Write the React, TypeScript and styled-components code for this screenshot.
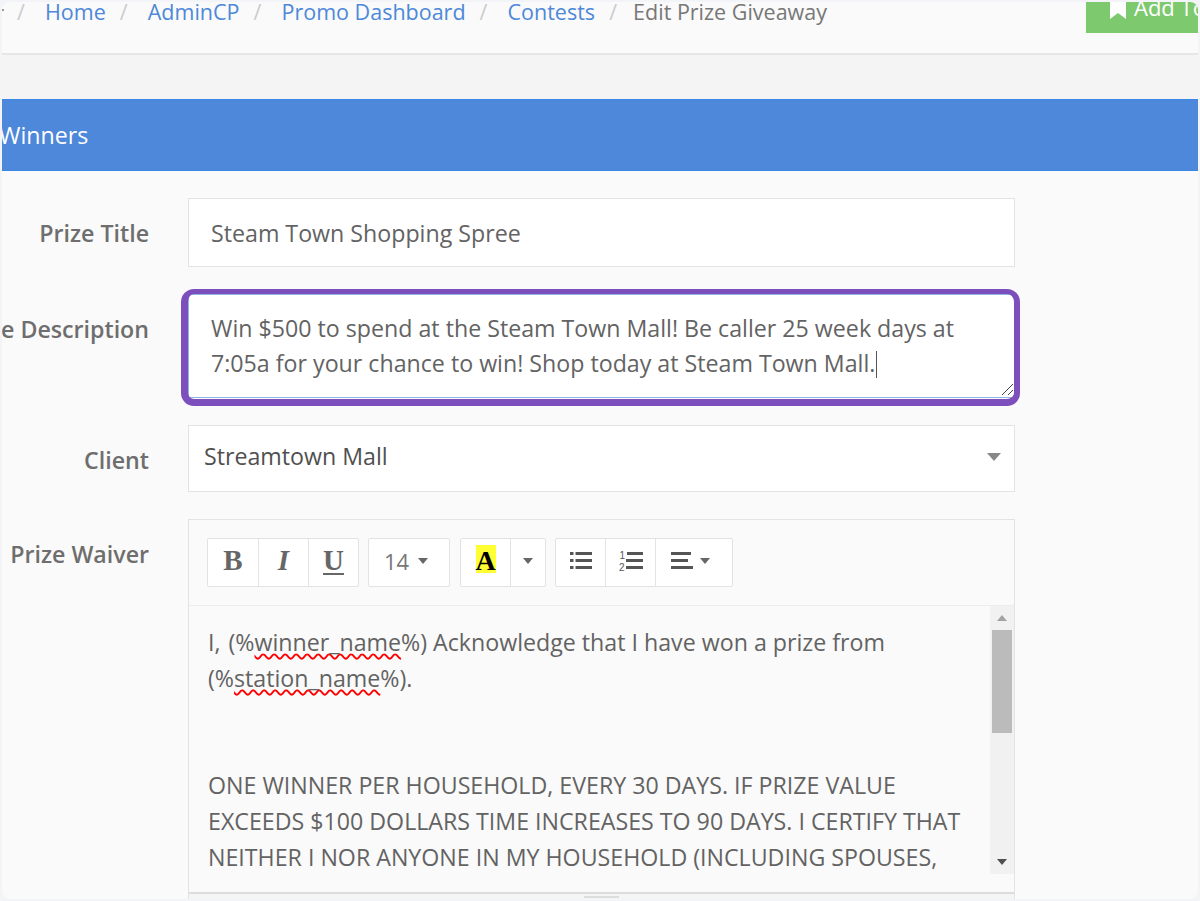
import React from "react";
import styled, { createGlobalStyle } from "styled-components";

const GlobalStyle = createGlobalStyle`
  html, body {
    margin: 0;
    padding: 0;
    background: #f3f4f8;
  }
  body {
    font-family: "Open Sans", "Liberation Sans", sans-serif;
    color: #636363;
  }
  * {
    box-sizing: border-box;
  }
`;

const Screen = styled.div`
  width: 1200px;
  height: 901px;
  padding: 2px;
  background: #f3f4f8;
  overflow: hidden;
`;

const Frame = styled.div`
  width: 100%;
  height: 100%;
  overflow: hidden;
  border-radius: 8px;
  background: #fafafa;
  display: flex;
  flex-direction: column;
`;

const Breadcrumbs = styled.div`
  height: 53px;
  flex: none;
  overflow: hidden;
  display: flex;
  justify-content: space-between;
  background: #fafafa;
  border-bottom: 2px solid #e6e6e6;
`;

const Trail = styled.ol`
  position: relative;
  list-style: none;
  margin: -11px 0 0;
  padding: 0 0 0 1px;
  height: 40px;
  display: flex;
  align-items: center;
  font-size: 21.5px;
  white-space: nowrap;

  &::before {
    content: "";
    position: absolute;
    left: 0;
    top: 18px;
    width: 2px;
    height: 2px;
    background: #999;
  }
`;

const Crumb = styled.li<{ $current?: boolean }>`
  color: ${(p) => (p.$current ? "#777" : "#4d88d9")};
`;

const Slash = styled.li<{ $tight?: boolean }>`
  color: #ccc;
  width: ${(p) => (p.$tight ? 38 : 42)}px;
  padding-right: ${(p) => (p.$tight ? 2 : 6)}px;
  text-align: center;
  flex: none;
`;

const AddButton = styled.div`
  width: 112px;
  height: 31px;
  flex: none;
  overflow: hidden;
  background: #7dc96d;
  color: #fff;
  font-size: 22px;
  display: flex;
  align-items: flex-start;
  padding: 0 0 0 24px;
  gap: 8px;
  white-space: nowrap;
`;

const AddLabel = styled.span`
  line-height: 30px;
  margin-top: -10px;
`;

const BookmarkIcon = styled.svg`
  flex: none;
`;

const Band = styled.div`
  height: 44px;
  flex: none;
  background: #f4f4f4;
`;

const PanelHeading = styled.h2`
  margin: 0;
  height: 72px;
  flex: none;
  display: flex;
  align-items: center;
  background: #4e88da;
  border-top: 1px solid #3a87e6;
  border-bottom: 1px solid #3a87e6;
  color: #fff;
  font-size: 23.2px;
  font-weight: 400;
  white-space: nowrap;
`;

const HeadingText = styled.span`
  margin-left: -3px;
`;

const Form = styled.div`
  flex: 1;
  min-height: 0;
  padding-top: 27px;
  display: flex;
  flex-direction: column;
  gap: 27px;
`;

const Row = styled.div`
  display: grid;
  grid-template-columns: 147px 827px;
  column-gap: 39px;
  align-items: start;
`;

const Label = styled.label<{ $top: number }>`
  display: flex;
  justify-content: flex-end;
  white-space: nowrap;
  font-size: 23.2px;
  font-weight: 600;
  line-height: 30px;
  color: #6e6e6e;
  padding-top: ${(p) => p.$top}px;
`;

const Input = styled.div`
  height: 69px;
  background: #fff;
  border: 1px solid #e3e3e3;
  padding: 0 22px;
  display: flex;
  align-items: center;
  font-size: 23.2px;
`;

const TextArea = styled.div`
  position: relative;
  height: 104px;
  background: #fff;
  border: 1px solid #8fb4e6;
  border-radius: 2px;
  padding: 16px 22px 0;
  font-size: 23.2px;
  line-height: 35px;

  /* purple focus ring, not quite even on each side */
  &::after {
    content: "";
    position: absolute;
    inset: -6px -6px -9px -8px;
    border-style: solid;
    border-color: #7d4fbd;
    border-width: 5px 6px 7px 7px;
    border-radius: 13px;
    pointer-events: none;
  }
`;

const Caret = styled.span`
  display: inline-block;
  width: 1px;
  height: 27px;
  margin-left: 1px;
  background: #555;
  vertical-align: -6px;
`;

const ResizeGrip = styled.svg`
  position: absolute;
  right: 0;
  bottom: 1px;
`;

const Select = styled.div`
  height: 67px;
  background: #fff;
  border: 1px solid #e3e3e3;
  padding: 0 15px;
  display: flex;
  align-items: center;
  justify-content: space-between;
  font-size: 23.2px;
  color: #505050;
`;

const SelectText = styled.span`
  margin-top: -5px;
`;

const SelectArrow = styled.span`
  width: 0;
  height: 0;
  border-left: 7px solid transparent;
  border-right: 7px solid transparent;
  border-top: 8px solid #888;
  margin: -4px -2px 0 0;
`;

const Editor = styled.div`
  border: 1px solid #e3e3e3;
  background: #fafafa;
`;

const Toolbar = styled.div`
  height: 86px;
  padding: 18px 0 0 18px;
  display: flex;
  border-bottom: 1px solid #ededed;
`;

const ButtonGroup = styled.div<{ $gap: number }>`
  display: flex;
  height: 49px;
  margin-left: ${(p) => p.$gap}px;
  background: #fff;
  border: 1px solid #e3e3e3;
  border-radius: 2px;
`;

const ToolButton = styled.div<{ $w: number; $shift?: number }>`
  width: ${(p) => p.$w}px;
  padding: 0 ${(p) => p.$shift ?? 0}px 4px 0;
  display: flex;
  align-items: center;
  justify-content: center;
  gap: 7px;
  color: #666;
  & + & {
    border-left: 1px solid #e3e3e3;
  }
`;

const SerifGlyph = styled.span<{ $italic?: boolean; $underline?: boolean }>`
  font-family: "Liberation Serif", serif;
  font-weight: 700;
  font-size: 29px;
  line-height: 1;
  margin-top: -1px;
  font-style: ${(p) => (p.$italic ? "italic" : "normal")};
  text-decoration: ${(p) => (p.$underline ? "underline" : "none")};
  text-underline-offset: 3px;
  text-decoration-thickness: 2px;
`;

const SizeText = styled.span`
  font-size: 22px;
  margin-right: 2px;
  color: #777;
`;

const Arrow = styled.span`
  width: 0;
  height: 0;
  border-left: 5.5px solid transparent;
  border-right: 5.5px solid transparent;
  border-top: 6px solid #666;
`;

const ColorGlyph = styled.span`
  width: 20px;
  height: 28px;
  margin-top: -3px;
  background: #ffff33;
  color: #000;
  font-family: "Liberation Serif", serif;
  font-weight: 700;
  font-size: 28px;
  line-height: 31px;
  text-align: center;
`;

const EditArea = styled.div`
  height: 268px;
  display: grid;
  grid-template-columns: 1fr 24px;
  overflow: hidden;
`;

const EditText = styled.div`
  padding: 19.4px 10px 0 19px;
  font-size: 23.2px;
  line-height: 35.7px;
  overflow: hidden;
`;

const Para = styled.p`
  margin: 0 0 71.4px;
`;

const LeadIn = styled.span`
  margin-right: 2px;
`;

const Misspelled = styled.span`
  text-decoration: underline wavy #f00 1.5px;
  text-decoration-skip-ink: none;
  text-underline-offset: 2px;
`;

const Scrollbar = styled.div`
  background: #f1f1f1;
  display: flex;
  flex-direction: column;
  align-items: center;
`;

const ScrollButton = styled.div`
  height: 24px;
  width: 100%;
  flex: none;
  display: flex;
  align-items: center;
  justify-content: center;
`;

const ScrollUp = styled.span`
  width: 0;
  height: 0;
  border-left: 5px solid transparent;
  border-right: 5px solid transparent;
  border-bottom: 6px solid #a3a3a3;
`;

const ScrollDown = styled.span`
  width: 0;
  height: 0;
  border-left: 5px solid transparent;
  border-right: 5px solid transparent;
  border-top: 6px solid #505050;
`;

const ScrollTrack = styled.div`
  flex: 1;
  width: 100%;
  padding: 0 2px;
`;

const ScrollThumb = styled.div`
  height: 103px;
  background: #bbb;
`;

const StatusBar = styled.div`
  height: 24px;
  margin-top: 18px;
  border-top: 2px solid #ddd;
  display: flex;
  justify-content: center;
  padding-top: 2px;
  background: #f5f5f5;
`;

const Grip = styled.div`
  width: 35px;
  height: 2px;
  background: #ddd;
`;

const Bookmark = () => (
  <BookmarkIcon width="16" height="17" viewBox="0 0 16 17">
    <path d="M0 0h16v17l-8-6-8 6z" fill="#fff" />
  </BookmarkIcon>
);

const BulletList = () => (
  <svg width="22" height="17" viewBox="0 0 22 17" fill="#555">
    <rect x="0" y="0" width="3.5" height="3" />
    <rect x="0" y="7" width="3.5" height="3" />
    <rect x="0" y="14" width="3.5" height="3" />
    <rect x="5.5" y="0" width="16.5" height="3" />
    <rect x="5.5" y="7" width="16.5" height="3" />
    <rect x="5.5" y="14" width="16.5" height="3" />
  </svg>
);

const NumberList = () => (
  <svg width="24" height="20" viewBox="0 0 24 20" fill="#555">
    <text x="0.5" y="7.5" fontSize="10" fontFamily="Liberation Sans, sans-serif">1</text>
    <text x="0" y="19.5" fontSize="10" fontFamily="Liberation Sans, sans-serif">2</text>
    <rect x="8" y="1" width="16" height="3" />
    <rect x="7" y="8" width="17" height="3" />
    <rect x="7" y="15" width="17" height="3" />
  </svg>
);

const AlignLeft = () => (
  <svg width="22" height="17" viewBox="0 0 22 17" fill="#555">
    <rect x="0" y="0" width="20" height="3" />
    <rect x="0" y="7" width="17" height="3" />
    <rect x="0" y="14" width="22" height="3" />
  </svg>
);

const App = () => (
  <Screen>
    <GlobalStyle />
    <Frame>
      <Breadcrumbs>
        <Trail>
          <Slash>/</Slash>
          <Crumb>Home</Crumb>
          <Slash>/</Slash>
          <Crumb>AdminCP</Crumb>
          <Slash>/</Slash>
          <Crumb>Promo Dashboard</Crumb>
          <Slash>/</Slash>
          <Crumb>Contests</Crumb>
          <Slash $tight>/</Slash>
          <Crumb $current>Edit Prize Giveaway</Crumb>
        </Trail>
        <AddButton>
          <Bookmark />
          <AddLabel>Add To</AddLabel>
        </AddButton>
      </Breadcrumbs>
      <Band />
      <PanelHeading>
        <HeadingText>Winners</HeadingText>
      </PanelHeading>
      <Form>
        <Row>
          <Label $top={20}>Prize Title</Label>
          <Input>Steam Town Shopping Spree</Input>
        </Row>
        <Row>
          <Label $top={20}>Prize Description</Label>
          <TextArea>
            Win $500 to spend at the Steam Town Mall! Be caller 25 week days at 7:05a for your chance to win! Shop today at Steam Town Mall.
            <Caret />
            <ResizeGrip width="14" height="14" viewBox="0 0 14 14">
              <path d="M2 13 13 2M8 13l5-5" stroke="#444" strokeWidth="1" fill="none" />
            </ResizeGrip>
          </TextArea>
        </Row>
        <Row>
          <Label $top={20}>Client</Label>
          <Select>
            <SelectText>Streamtown Mall</SelectText>
            <SelectArrow />
          </Select>
        </Row>
        <Row>
          <Label $top={20}>Prize Waiver</Label>
          <Editor>
            <Toolbar>
              <ButtonGroup $gap={0}>
                <ToolButton $w={50}><SerifGlyph>B</SerifGlyph></ToolButton>
                <ToolButton $w={50}><SerifGlyph $italic>I</SerifGlyph></ToolButton>
                <ToolButton $w={50}><SerifGlyph $underline>U</SerifGlyph></ToolButton>
              </ButtonGroup>
              <ButtonGroup $gap={9}>
                <ToolButton $w={80} $shift={6}><SizeText>14</SizeText><Arrow /></ToolButton>
              </ButtonGroup>
              <ButtonGroup $gap={10}>
                <ToolButton $w={49}><ColorGlyph>A</ColorGlyph></ToolButton>
                <ToolButton $w={35}><Arrow /></ToolButton>
              </ButtonGroup>
              <ButtonGroup $gap={9}>
                <ToolButton $w={49}><BulletList /></ToolButton>
                <ToolButton $w={50}><NumberList /></ToolButton>
                <ToolButton $w={77} $shift={8}><AlignLeft /><Arrow /></ToolButton>
              </ButtonGroup>
            </Toolbar>
            <EditArea>
              <EditText>
                <Para>
                  <LeadIn>I,</LeadIn> (%<Misspelled>winner_name</Misspelled>%) Acknowledge that I have won a prize from (%<Misspelled>station_name</Misspelled>%).
                </Para>
                <Para>
                  ONE WINNER PER HOUSEHOLD, EVERY 30 DAYS. IF PRIZE VALUE EXCEEDS $100 DOLLARS TIME INCREASES TO 90 DAYS. I CERTIFY THAT NEITHER I NOR ANYONE IN MY HOUSEHOLD (INCLUDING SPOUSES,
                </Para>
              </EditText>
              <Scrollbar>
                <ScrollButton><ScrollUp /></ScrollButton>
                <ScrollTrack><ScrollThumb /></ScrollTrack>
                <ScrollButton><ScrollDown /></ScrollButton>
              </Scrollbar>
            </EditArea>
            <StatusBar><Grip /></StatusBar>
          </Editor>
        </Row>
      </Form>
    </Frame>
  </Screen>
);

export default App;
